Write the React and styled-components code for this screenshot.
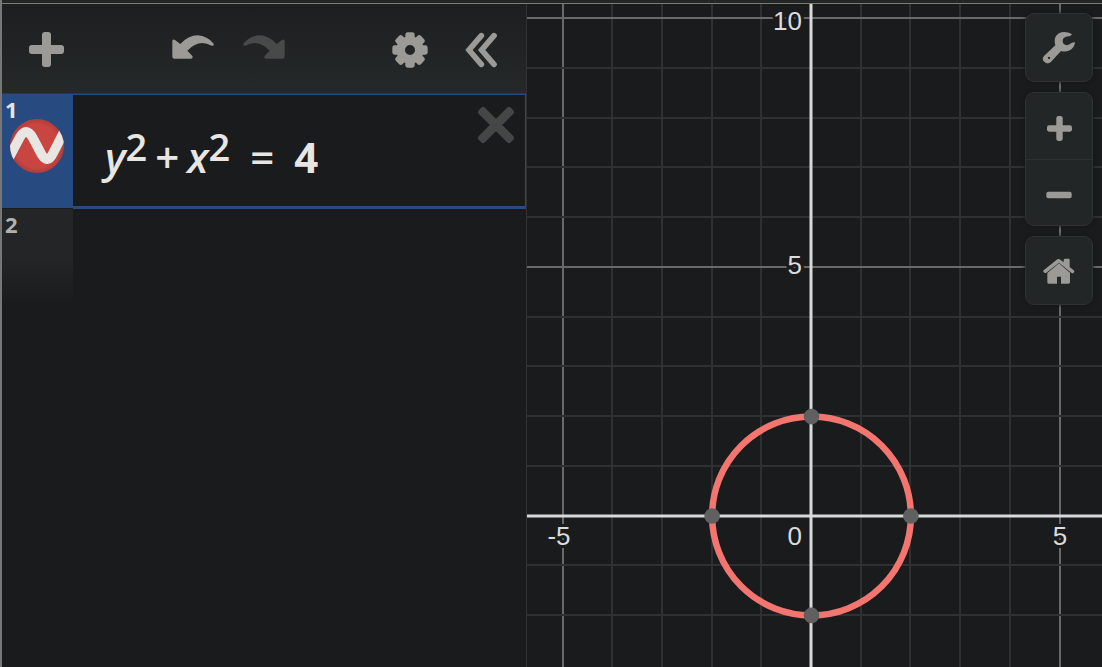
import React from 'react';
import styled, { createGlobalStyle, css } from 'styled-components';

const color = {
  bg: '#1a1b1c',
  icon: '#9b9a97',
  faint: '#484a4a',
  text: '#e8e6e3',
  blue: '#274b80',
  curve: '#f2766f',
};

const GlobalStyle = createGlobalStyle`
  * { box-sizing: border-box; }
  body { margin: 0; background: ${color.bg}; font-family: "Open Sans", "Noto Sans", sans-serif; }
`;

const Page = styled.div`
  display: flex;
  flex-direction: column;
  min-height: 100vh;
  border-left: 2px solid #777777;
`;

const TopEdge = styled.header`
  height: 4px;
  background: #232526;
  border-bottom: 1px solid #7d7a70;
`;

const Main = styled.main`
  flex: 1;
  display: grid;
  grid-template-columns: minmax(340px, 525fr) minmax(0, 575fr);
`;

const Panel = styled.section`
  display: flex;
  flex-direction: column;
  border-right: 1px solid #323232;
`;

const Toolbar = styled.div`
  display: flex;
  justify-content: space-between;
  height: 90px;
  padding: 2px 10px 0 9px;
  background: linear-gradient(#1d1e1f, #252929);
  border-bottom: 1px solid #353535;
`;

const Group = styled.div`
  display: flex;
`;

const plainButton = css`
  display: flex;
  align-items: center;
  justify-content: center;
  padding: 0;
  border: 0;
  background: none;
  color: ${color.icon};
  cursor: pointer;
`;

const ToolButton = styled.button`
  ${plainButton}
  width: 71px;
  &:disabled { color: ${color.faint}; cursor: default; }
`;

const Icon = styled.svg`
  display: block;
  fill: currentColor;
`;

const List = styled.ol`
  list-style: none;
  margin: 0;
  padding: 0;
`;

const Row = styled.li`
  display: flex;
  height: 115px;
`;

const Tab = styled.div`
  display: flex;
  flex-direction: column;
  flex: 0 0 71px;
  height: ${(p) => (p.$active ? 114 : 96)}px;
  background: ${(p) => (p.$active ? color.blue : `linear-gradient(#242526 50%, ${color.bg})`)};
  color: ${(p) => (p.$active ? color.text : '#b3b1ad')};
`;

const RowNumber = styled.span`
  padding: 5px 0 0 3px;
  font-size: 22px;
  line-height: 20px;
  font-weight: 700;
`;

const CurveButton = styled.button`
  ${plainButton}
  align-self: flex-start;
  margin-left: 8px;
`;

const Field = styled.div`
  flex: 1;
  display: flex;
  justify-content: space-between;
  align-items: flex-start;
  border: solid ${color.blue};
  border-width: 1px 1px 3px 0;
  padding: 0 9px 0 32px;
`;

const Formula = styled.div`
  display: flex;
  align-items: baseline;
  padding-top: 32px;
  font-size: 42px;
  line-height: 60px;
  font-weight: 600;
  color: ${color.text};
  white-space: nowrap;
`;

const Variable = styled.var`
  font-style: italic;
`;

const Power = styled.sup`
  position: relative;
  top: -12px;
  font-size: 38px;
  line-height: 1;
  vertical-align: baseline;
`;

const Operator = styled.span`
  margin: 0 ${(p) => (p.$wide ? 20 : 8)}px;
`;

const Value = styled.span`
  font-weight: 700;
`;

const CloseButton = styled.button`
  ${plainButton}
  margin-top: 10px;
  color: #454746;
`;

const GraphArea = styled.section`
  position: relative;
  min-width: 0;
`;

const Chart = styled.svg`
  display: block;
  width: 100%;
  height: 100%;
`;

const AxisLabel = styled.text`
  font-family: "Liberation Sans", Arial, sans-serif;
  font-size: 26px;
  fill: #dcdcdc;
  stroke: ${color.bg};
  stroke-width: 6px;
  stroke-linejoin: round;
  paint-order: stroke;
`;

const Controls = styled.div`
  position: absolute;
  top: 9px;
  right: 9px;
  display: flex;
  flex-direction: column;
  gap: 10px;
  width: 68px;
`;

const ControlCard = styled.div`
  display: flex;
  flex-direction: column;
  border: 1px solid #2f3232;
  border-radius: 9px;
  background: #232627;
  box-shadow: 0 0 4px #151616;
`;

const ControlButton = styled.button`
  ${plainButton}
  height: ${(p) => (p.$paired ? 66 : 67)}px;
  padding-top: ${(p) => (p.$paired ? 5 : 0)}px;
  & + & { border-top: 1px solid #2f3232; }
`;

const PlusIcon = ({ size }) => (
  <Icon width={size} height={size} viewBox="0 0 105 105" aria-hidden="true">
    <rect x="39" width="27" height="105" rx="9" />
    <rect y="39" width="105" height="27" rx="9" />
  </Icon>
);

const ArrowIcon = ({ flip }) => (
  <Icon width="42" height="30" viewBox="0 0 126 90" aria-hidden="true">
    <path
      transform={flip ? 'translate(126 0) scale(-1 1)' : undefined}
      d="M1 17Q3 11 9 15L25 27Q49 1 77 1Q106 3 125 26Q127 33 119 32Q81 10 46 47L61 63Q64 71 57 71H7Q1 71 1 65Z"
    />
  </Icon>
);

const GearIcon = () => (
  <Icon width="36" height="36" viewBox="-54 -54 108 108" aria-hidden="true">
    <circle r="28" fill="none" stroke="currentColor" strokeWidth="26" />
    {[0, 45, 90, 135, 180, 225, 270, 315].map((a) => (
      <rect key={a} x="-14" y="-53" width="28" height="26" rx="7" transform={`rotate(${a})`} />
    ))}
  </Icon>
);

const CollapseIcon = () => (
  <Icon width="32" height="36" viewBox="0 0 96 108" aria-hidden="true">
    <g fill="none" stroke="currentColor" strokeWidth="17" strokeLinecap="round">
      <path d="M49 11L12 54L49 97" />
      <path d="M87 11L50 54L87 97" />
    </g>
  </Icon>
);

const CrossIcon = () => (
  <Icon width="40" height="40" viewBox="-60 -60 120 120" aria-hidden="true">
    <rect x="-68" y="-13" width="136" height="26" rx="8" transform="rotate(45)" />
    <rect x="-68" y="-13" width="136" height="26" rx="8" transform="rotate(-45)" />
  </Icon>
);

const CurveIcon = () => (
  <Icon width="54" height="54" viewBox="30 102 162 162" aria-hidden="true">
    <defs>
      <clipPath id="disc"><circle cx="111" cy="183" r="81" /></clipPath>
      <radialGradient id="shade">
        <stop offset="0.8" stopColor="#c94541" />
        <stop offset="1" stopColor="#b13c3b" />
      </radialGradient>
    </defs>
    <circle cx="111" cy="183" r="81" fill="url(#shade)" />
    <path
      clipPath="url(#disc)"
      d="M22 228L60 156Q79 124 98 158L124 207Q142 239 159 205L200 124"
      fill="none"
      stroke={color.text}
      strokeWidth="29"
    />
  </Icon>
);

const WrenchIcon = () => (
  <Icon width="34" height="34" viewBox="97 90 102 102" aria-hidden="true">
    <path
      fillRule="evenodd"
      d="M187 100C167 88 145 92 137 109Q133 120 137 133L103 165Q96 173 102 181Q112 192 123 184L154 150C176 156 194 144 196 124Q187 123 181 129Q171 136 162 129Q156 120 162 111Q170 105 179 106Q184 105 187 100ZM118 167a3.500 3.500 0 1 0 0.100 0Z"
    />
  </Icon>
);

const MinusIcon = () => (
  <Icon width="26" height="26" viewBox="0 0 78 78" aria-hidden="true">
    <rect x="1" y="29" width="76" height="20" rx="6" />
  </Icon>
);

const HomeIcon = () => (
  <Icon width="32" height="26" viewBox="100 320 96 78" aria-hidden="true">
    <path d="M103 356L143 324Q148 321 152 325L162 333V325Q163 322 166 322H177Q180 322 180 325V347L192 357Q196 361 192 364Q189 367 185 364L148 334L110 364Q106 367 102 363Q99 359 103 356Z" />
    <path d="M113 365L148 336L181 364V393Q181 397 177 397H154V376H142V397H117Q113 397 113 393Z" />
  </Icon>
);

const UNIT = 49.7;
const px = (x) => Math.round(811 + x * UNIT);
const py = (y) => Math.floor(516 - y * 49.75);
const columns = [-5, -4, -3, -2, -1, 1, 2, 3, 4, 5];
const rows = [10, 9, 8, 7, 6, 5, 4, 3, 2, 1, -1, -2];
const byWeight = (a, b) => (a % 5 === 0) - (b % 5 === 0);
const lineColor = (n) => (n % 5 === 0 ? '#68696a' : '#2f3031');
const intercepts = [[0, 2], [2, 0], [0, -2], [-2, 0]];

const Graph = () => (
  <Chart viewBox="527 4 575 663" preserveAspectRatio="xMidYMid slice" role="img" aria-label="Circle of radius 2 about the origin">
    {[...columns].sort(byWeight).map((x) => (
      <path key={x} d={`M${px(x)} -400V1100`} stroke={lineColor(x)} strokeWidth="2" />
    ))}
    {[...rows].sort(byWeight).map((y) => (
      <path key={y} d={`M-400 ${py(y)}H2000`} stroke={lineColor(y)} strokeWidth="2" />
    ))}
    <path d="M811 -400V1100M-400 516H2000" stroke="#d8d9d8" strokeWidth="3" />
    <AxisLabel x="802" y="30" textAnchor="end">10</AxisLabel>
    <AxisLabel x="802" y="274" textAnchor="end">5</AxisLabel>
    <AxisLabel x="802" y="545" textAnchor="end">0</AxisLabel>
    <AxisLabel x="559" y="545" textAnchor="middle">-5</AxisLabel>
    <AxisLabel x="1060" y="545" textAnchor="middle">5</AxisLabel>
    <circle cx="811.500" cy="516" r={2 * UNIT} fill="none" stroke={color.curve} strokeWidth="6.500" />
    {intercepts.map(([x, y]) => (
      <circle key={`${x},${y}`} cx={811.5 + x * UNIT} cy={516 - y * UNIT} r="7.800" fill="#606060" />
    ))}
  </Chart>
);

export default function App() {
  return (
    <>
      <GlobalStyle />
      <Page>
        <TopEdge />
        <Main>
          <Panel>
            <Toolbar>
              <ToolButton aria-label="Add item"><PlusIcon size={35} /></ToolButton>
              <Group>
                <ToolButton aria-label="Undo"><ArrowIcon /></ToolButton>
                <ToolButton aria-label="Redo" disabled><ArrowIcon flip /></ToolButton>
              </Group>
              <Group>
                <ToolButton aria-label="Edit list"><GearIcon /></ToolButton>
                <ToolButton aria-label="Hide list"><CollapseIcon /></ToolButton>
              </Group>
            </Toolbar>
            <List>
              <Row>
                <Tab $active>
                  <RowNumber>1</RowNumber>
                  <CurveButton aria-label="Hide curve"><CurveIcon /></CurveButton>
                </Tab>
                <Field>
                  <Formula>
                    <Variable>y</Variable>
                    <Power>2</Power>
                    <Operator>+</Operator>
                    <Variable>x</Variable>
                    <Power>2</Power>
                    <Operator $wide>=</Operator>
                    <Value>4</Value>
                  </Formula>
                  <CloseButton aria-label="Delete expression"><CrossIcon /></CloseButton>
                </Field>
              </Row>
              <Row>
                <Tab><RowNumber>2</RowNumber></Tab>
              </Row>
            </List>
          </Panel>
          <GraphArea>
            <Graph />
            <Controls>
              <ControlCard>
                <ControlButton aria-label="Graph settings"><WrenchIcon /></ControlButton>
              </ControlCard>
              <ControlCard>
                <ControlButton $paired aria-label="Zoom in"><PlusIcon size={25} /></ControlButton>
                <ControlButton $paired aria-label="Zoom out"><MinusIcon /></ControlButton>
              </ControlCard>
              <ControlCard>
                <ControlButton aria-label="Default view"><HomeIcon /></ControlButton>
              </ControlCard>
            </Controls>
          </GraphArea>
        </Main>
      </Page>
    </>
  );
}
